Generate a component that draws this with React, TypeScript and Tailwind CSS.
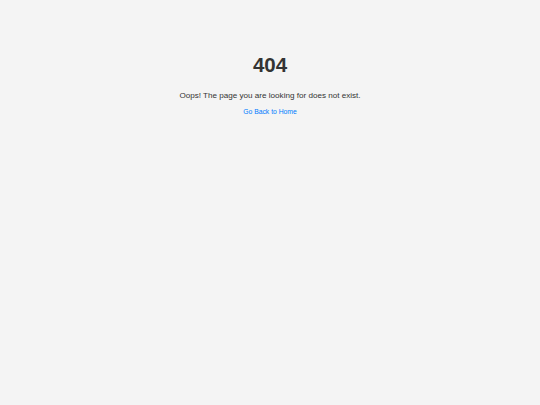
export default function App() {
  return (
    <div className="min-h-[405px] bg-[#f4f4f4] font-['Liberation_Sans',Arial,sans-serif] text-center">
      <div className="pt-[53px] flex flex-col items-center">
        <h1 className="text-[20.5px] leading-[24px] font-bold text-[#333]">404</h1>
        <p className="mt-[14px] text-[8.1px] leading-[10px] text-[#333]">
          Oops! The page you are looking for does not exist.
        </p>
        <a href="#" className="mt-[6px] text-[6.8px] leading-[9px] text-[#007bff]">
          Go Back to Home
        </a>
      </div>
    </div>
  );
}
